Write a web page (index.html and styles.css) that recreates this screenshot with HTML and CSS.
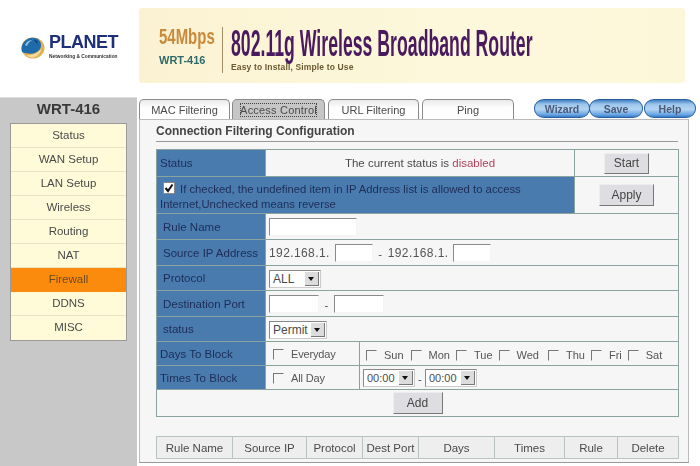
FILE: index.html
```html
<!DOCTYPE html>
<html lang="en">
<head>
<meta charset="UTF-8">
<title>WRT-416 Firewall</title>
<link rel="stylesheet" href="styles.css">
</head>
<body>
<div class="header">
  <div class="logo">
    <svg class="globe" width="25" height="22" viewBox="0 0 25 22">
      <ellipse cx="13" cy="11" rx="11.5" ry="10.5" fill="#e0b255"/>
      <path d="M17 1.5C21 4 22 8 20 12C17 17 9 18 2 15C0 9 4 2 11 .8C13 .5 15 .8 17 1.5Z" fill="#1f6aa8"/>
      <path d="M5 8C6 5 9 3 13 2.5C10 4 8 6 7 9Z" fill="#8fc0e2"/>
      <path d="M14 3C17 3 18 5 17 7C16 5 15 4 14 3Z" fill="#0f3f78"/>
      <path d="M6 18C11 19 17 17 21 12C21 16 17 20 12 20.5C10 20.5 8 19.5 6 18Z" fill="#f0dca0"/>
    </svg>
    <div class="logo-text">
      <div class="logo-name">PLANET</div>
      <div class="logo-sub">Networking &amp; Communication</div>
    </div>
  </div>
  <div class="banner">
    <div class="speed">
      <div class="mbps"><span>54Mbps</span></div>
      <div class="model">WRT-416</div>
    </div>
    <div class="divider"></div>
    <div class="headline">
      <div class="title"><span>802.11g Wireless Broadband Router</span></div>
      <div class="tagline">Easy to Install, Simple to Use</div>
    </div>
  </div>
</div>

<div class="main">
  <div class="side">
    <div class="side-title">WRT-416</div>
    <div class="menu">
      <div class="item">Status</div>
      <div class="item">WAN Setup</div>
      <div class="item">LAN Setup</div>
      <div class="item">Wireless</div>
      <div class="item">Routing</div>
      <div class="item">NAT</div>
      <div class="item active">Firewall</div>
      <div class="item">DDNS</div>
      <div class="item">MISC</div>
    </div>
  </div>

  <div class="content">
    <div class="topbar">
      <div class="tab tab-mac">MAC Filtering</div>
      <div class="tab tab-access selected"><span>Access Control</span></div>
      <div class="tab tab-url">URL Filtering</div>
      <div class="tab tab-ping">Ping</div>
      <div class="pills">
        <div class="pill pill-wizard">Wizard</div>
        <div class="pill pill-save">Save</div>
        <div class="pill pill-help">Help</div>
      </div>
    </div>

    <div class="panel">
      <div class="heading">Connection Filtering Configuration</div>

      <table class="form">
        <colgroup><col class="c1"><col class="c2"><col class="c3"><col class="c4"></colgroup>
        <tr class="r-status">
          <td class="lab tight">Status</td>
          <td colspan="2" class="center">The current status is <span class="off">disabled</span></td>
          <td class="center"><button class="btn btn-start">Start</button></td>
        </tr>
        <tr class="r-check">
          <td colspan="3" class="lab tight note">
            <span class="ticked"><svg width="10" height="10" viewBox="0 0 10 10"><path d="M1.5 5L4 8L8.5 1.5" fill="none" stroke="#111" stroke-width="2"/></svg></span>If checked, the undefined item in IP Address list is allowed to access<br>Internet,Unchecked means reverse
          </td>
          <td class="center"><button class="btn btn-apply">Apply</button></td>
        </tr>
        <tr class="r-rule">
          <td class="lab">Rule Name</td>
          <td colspan="3"><div class="line"><input class="txt w-name" type="text"></div></td>
        </tr>
        <tr class="r-ip">
          <td class="lab">Source IP Address</td>
          <td colspan="3"><div class="line"><span class="ip">192.168.1.</span><input class="txt w-ip" type="text"><span class="dash dash-ip">-</span><span class="ip">192.168.1.</span><input class="txt w-ip" type="text"></div></td>
        </tr>
        <tr class="r-proto">
          <td class="lab">Protocol</td>
          <td colspan="3"><div class="line"><div class="select w-all">ALL<span class="arrow"></span></div></div></td>
        </tr>
        <tr class="r-port">
          <td class="lab">Destination Port</td>
          <td colspan="3"><div class="line"><input class="txt w-port" type="text"><span class="dash dash-port">-</span><input class="txt w-port" type="text"></div></td>
        </tr>
        <tr class="r-state">
          <td class="lab">status</td>
          <td colspan="3"><div class="line"><div class="select w-permit">Permit<span class="arrow"></span></div></div></td>
        </tr>
        <tr class="r-days">
          <td class="lab tight">Days To Block</td>
          <td class="opts"><label class="opt first"><input type="checkbox">Everyday</label></td>
          <td colspan="2" class="opts">
            <div class="days">
              <label class="opt"><input type="checkbox">Sun</label>
              <label class="opt"><input type="checkbox">Mon</label>
              <label class="opt"><input type="checkbox">Tue</label>
              <label class="opt"><input type="checkbox">Wed</label>
              <label class="opt"><input type="checkbox">Thu</label>
              <label class="opt"><input type="checkbox">Fri</label>
              <label class="opt"><input type="checkbox">Sat</label>
            </div>
          </td>
        </tr>
        <tr class="r-times">
          <td class="lab tight">Times To Block</td>
          <td class="opts"><label class="opt first"><input type="checkbox">All Day</label></td>
          <td colspan="2"><div class="line"><div class="select w-time">00:00<span class="arrow"></span></div><span class="dash dash-time">-</span><div class="select w-time">00:00<span class="arrow"></span></div></div></td>
        </tr>
        <tr class="r-add">
          <td colspan="4" class="center"><button class="btn btn-add">Add</button></td>
        </tr>
      </table>

      <table class="rules">
        <colgroup>
          <col class="k1"><col class="k2"><col class="k3"><col class="k4"><col class="k5"><col class="k6"><col class="k7"><col class="k8">
        </colgroup>
        <tr>
          <th>Rule Name</th><th>Source IP</th><th>Protocol</th><th>Dest Port</th><th>Days</th><th>Times</th><th>Rule</th><th>Delete</th>
        </tr>
      </table>
    </div>
  </div>
</div>
</body>
</html>
```

FILE: styles.css
```css
html, body { margin:0; padding:0; }
body { width:700px; height:466px; overflow:hidden; background:#fff; font-family:"Liberation Sans", Arial, sans-serif; font-size:11.5px; color:#4a4a4a; filter:blur(.3px); }

/* header */
.header { display:flex; height:97px; background:#fff; }
.logo { width:139px; display:flex; align-items:flex-start; padding:34px 0 0 20px; box-sizing:border-box; }
.globe { margin-top:3px; flex:none; }
.logo-text { margin-left:4px; }
.logo-name { font-size:18px; font-weight:bold; line-height:17px; color:#1d2f78; letter-spacing:-.5px; }
.logo-sub { font-size:4.8px; font-weight:bold; line-height:7px; margin-top:2px; color:#333; white-space:nowrap; }
.banner { width:546px; height:75px; margin-top:8px; display:flex; background:linear-gradient(90deg,#fbf2d2,#fdf8dc 60%,#fdf7da); border-radius:3px; box-sizing:border-box; padding:18px 0 0 20px; }
.speed { width:55px; }
.mbps { height:22px; white-space:nowrap; }
.mbps span { display:inline-block; width:54px; font-size:22px; line-height:22px; font-weight:bold; color:#c98a3c; transform:scaleX(.68); transform-origin:left top; }
.model { font-size:11px; line-height:14px; font-weight:bold; color:#2f6a6a; margin-top:5px; }
.divider { width:1px; height:46px; margin:1px 8px 0 8px; background:#a08f66; }
.headline { width:310px; }
.title { height:36px; white-space:nowrap; }
.title span { display:inline-block; width:302px; font-size:37px; line-height:36px; font-weight:bold; color:#4a1a5e; transform:scaleX(.478); transform-origin:left top; }
.tagline { font-size:8.5px; line-height:11px; font-weight:bold; color:#6a5a30; white-space:nowrap; letter-spacing:.15px; }

/* left side */
.main { display:flex; height:369px; }
.side { width:137px; margin-right:2px; background:#c8c8c8; border-top:1px solid #ddd; box-sizing:border-box; }
.side-title { height:25px; line-height:21px; text-align:center; font-size:15px; font-weight:bold; color:#3a3a3a; }
.menu { margin-left:10px; width:117px; border:1px solid #9a9a9a; box-sizing:border-box; background:#fffbd8; }
.item { height:24px; line-height:22px; text-align:center; border-bottom:1px solid #e8e4c4; box-sizing:border-box; }
.item:last-child { border-bottom:0; }
.item.active { background:#fb8b0c; color:#6d4a20; border-bottom:0; }

/* tabs */
.content { flex:1; min-width:0; }
.topbar { display:flex; height:22px; box-sizing:border-box; padding-top:2px; font-size:11px; }
.tab { height:20px; line-height:20px; text-align:center; box-sizing:border-box; border:1px solid #8a8a8a; border-bottom:0; border-radius:5px 5px 0 0; background:linear-gradient(#e9e9e9,#fdfdfd 40%,#fff); margin-right:3px; }
.tab-mac { width:91px; margin-right:2px; }
.tab-access { width:93px; margin-right:3px; }
.tab-url { width:91px; margin-right:3px; }
.tab-ping { width:92px; }
.tab.selected { background:#c6c6c6; }
.tab.selected span { outline:1px dotted #444; outline-offset:-1px; padding:1px 0; letter-spacing:.2px; }
.pills { display:flex; margin-left:17px; }
.pill { height:19px; line-height:18px; text-align:center; font-size:10.5px; font-weight:bold; box-sizing:border-box; border:1px solid #2a5f9e; border-radius:10px / 9px; background:linear-gradient(#3f7fc2,#9cc5ec 25%,#b4d5f2 55%,#6aa6e4 85%,#3c7cc8); color:#4a5a78; }
.pill-wizard { width:56px; }
.pill-save { width:54px; margin-left:-1px; }
.pill-help { width:52px; margin-left:1px; }

/* main panel */
.panel { width:550px; height:344px; box-sizing:border-box; background:#f6f6f6; border:1px solid #bbb; border-bottom-color:#999; padding:0 10px 0 16px; }
.heading { height:21px; line-height:23px; font-size:12px; font-weight:bold; color:#444; border-bottom:1px solid #999; margin-bottom:7px; }

table { border-collapse:collapse; table-layout:fixed; width:522px; }
.form { border:1px solid #8aa3a0; }
.form td { border:1px solid #8aa3a0; padding:0; vertical-align:middle; }
.form .lab { background:#4a7bae; color:#1d2d58; padding-left:6px; white-space:nowrap; }
.form .lab.tight { padding-left:3px; }
.form .opts { padding-top:3px; }
.c1 { width:109px; }
.c2 { width:94px; }
.c3 { width:215px; }
.c4 { width:104px; }
.center { text-align:center; }
.off { color:#b3405a; }
.r-status { height:27px; }
.r-check { height:37px; }
.r-rule { height:26px; }
.r-ip { height:26px; }
.r-proto { height:25px; }
.r-port { height:26px; }
.r-state { height:25px; }
.r-days { height:24px; }
.r-times { height:24px; }
.r-add { height:27px; }
.form .note { font-size:11.3px; line-height:15px; padding-top:3px; }
.ticked { display:inline-block; width:10px; height:10px; margin:0 5px 0 3px; background:#fff; border:1px solid #888; vertical-align:-1px; }
.ticked svg { display:block; }

.line { display:flex; align-items:center; padding-left:3px; }
.ip { font-size:12px; letter-spacing:.4px; color:#555; }
.txt { height:18px; box-sizing:border-box; background:#fff; border:1px solid #f4f4f4; border-left-color:#8a8a8a; border-top-color:#8a8a8a; padding:0; margin:0; }
.w-name { width:88px; }
.w-ip { width:38px; margin-left:5px; }
.w-port { width:50px; }
.dash { text-align:center; padding-top:2px; }
.dash-ip { width:15px; }
.dash-port { width:15px; }
.dash-time { width:10px; }
.select { position:relative; height:18px; line-height:17px; font-size:12px; box-sizing:border-box; padding-left:3px; background:#fff; border:1px solid #ccc; border-left-color:#888; border-top-color:#888; }
.w-all { width:52px; margin-top:1px; }
.w-permit { width:58px; margin-top:1px; }
.w-time { width:52px; font-size:11px; }
.arrow { position:absolute; right:1px; top:1px; width:14px; height:14px; background:#dcdcdc; border-right:1px solid #777; border-bottom:1px solid #777; box-sizing:border-box; }
.arrow::after { content:""; position:absolute; left:3px; top:5px; border:3px solid transparent; border-top:4px solid #111; border-bottom:0; }

.opt { display:inline-flex; align-items:center; font-size:11px; color:#555; white-space:nowrap; }
.opt input { appearance:none; width:11px; height:11px; margin:0 7px 0 0; border:1px solid transparent; border-left-color:#777; border-top-color:#777; background:transparent; }
.opt.first { padding-left:7px; letter-spacing:-.15px; }
.days { display:flex; padding-left:6px; gap:6px; }
.days .opt:nth-child(2) { margin-left:1px; }
.days .opt:nth-child(5) { margin-left:3px; }

.btn { font-family:inherit; font-size:12px; color:#444; background:#dedee2; border:1px solid; border-color:#eee #777 #777 #eee; padding:0; display:block; margin:0 auto; }
.btn-start { width:45px; height:21px; }
.btn-apply { width:55px; height:22px; }
.btn-add { width:50px; height:22px; }

.rules { margin-top:19px; border:1px solid #b8c4c2; }
.rules th { height:21px; padding:0; font-weight:normal; background:#eeeeee; border:1px solid #b8c4c2; white-space:nowrap; }
.k1 { width:76px; }
.k2 { width:74px; }
.k3 { width:56px; }
.k4 { width:56px; }
.k5 { width:76px; }
.k6 { width:70px; }
.k7 { width:53px; }
.k8 { width:61px; }
```
